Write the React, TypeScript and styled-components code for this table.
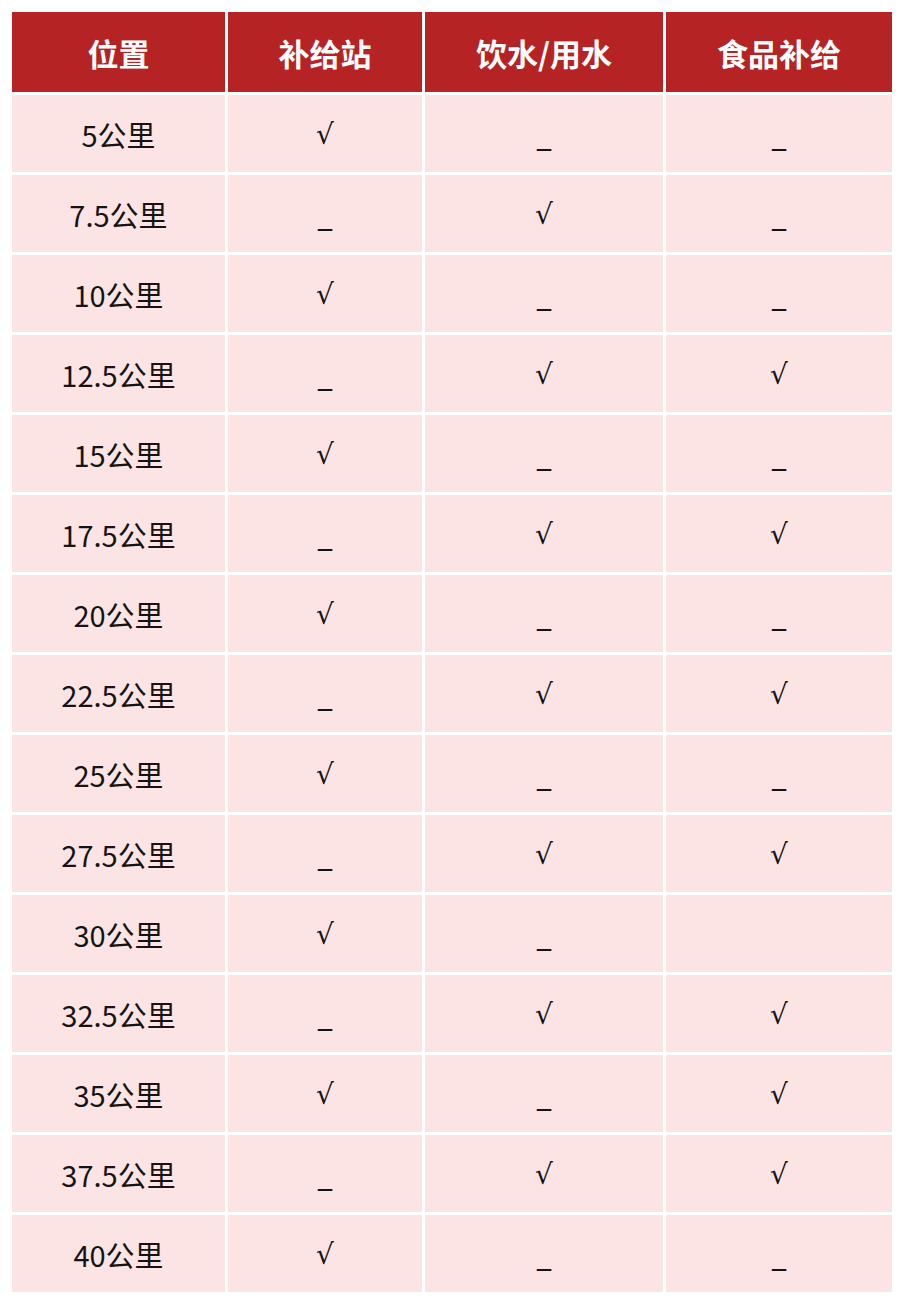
import React from 'react';
import styled, { createGlobalStyle } from 'styled-components';

const GlobalStyle = createGlobalStyle`
  html, body {
    margin: 0;
    padding: 0;
    background: #ffffff;
  }
  body {
    font-family: "Noto Sans CJK SC", "Noto Sans", sans-serif;
  }
`;

const Page = styled.div`
  padding: 12px;
`;

const Grid = styled.div`
  display: grid;
  grid-template-columns: 213px 194px 238px 226px;
  grid-auto-rows: 77px;
  grid-template-rows: 80px;
  gap: 3px;
  width: 880px;
`;

const HeadCell = styled.div`
  display: flex;
  align-items: center;
  justify-content: center;
  background: #b52325;
  color: #ffffff;
  font-size: 31px;
  font-weight: 700;
`;

const Cell = styled.div<{ $mark?: boolean }>`
  display: flex;
  align-items: center;
  justify-content: center;
  background: #fce4e4;
  color: #141414;
  font-size: ${p => (p.$mark ? '28px' : '29px')};
  font-family: ${p =>
    p.$mark ? '"DejaVu Sans", "Liberation Sans", sans-serif' : 'inherit'};
  padding-top: ${p => (p.$mark ? '2px' : '0')};
`;

const headers = ['位置', '补给站', '饮水/用水', '食品补给'];

const rows: [string, string, string, string][] = [
  ['5公里', '√', '_', '_'],
  ['7.5公里', '_', '√', '_'],
  ['10公里', '√', '_', '_'],
  ['12.5公里', '_', '√', '√'],
  ['15公里', '√', '_', '_'],
  ['17.5公里', '_', '√', '√'],
  ['20公里', '√', '_', '_'],
  ['22.5公里', '_', '√', '√'],
  ['25公里', '√', '_', '_'],
  ['27.5公里', '_', '√', '√'],
  ['30公里', '√', '_', ''],
  ['32.5公里', '_', '√', '√'],
  ['35公里', '√', '_', '√'],
  ['37.5公里', '_', '√', '√'],
  ['40公里', '√', '_', '_'],
];

const App: React.FC = () => {
  return (
    <>
      <GlobalStyle />
      <Page>
        <Grid>
          {headers.map(h => (
            <HeadCell key={h}>{h}</HeadCell>
          ))}
          {rows.map(r =>
            r.map((v, i) => (
              <Cell key={r[0] + i} $mark={i > 0}>
                {v}
              </Cell>
            ))
          )}
        </Grid>
      </Page>
    </>
  );
};

export default App;
